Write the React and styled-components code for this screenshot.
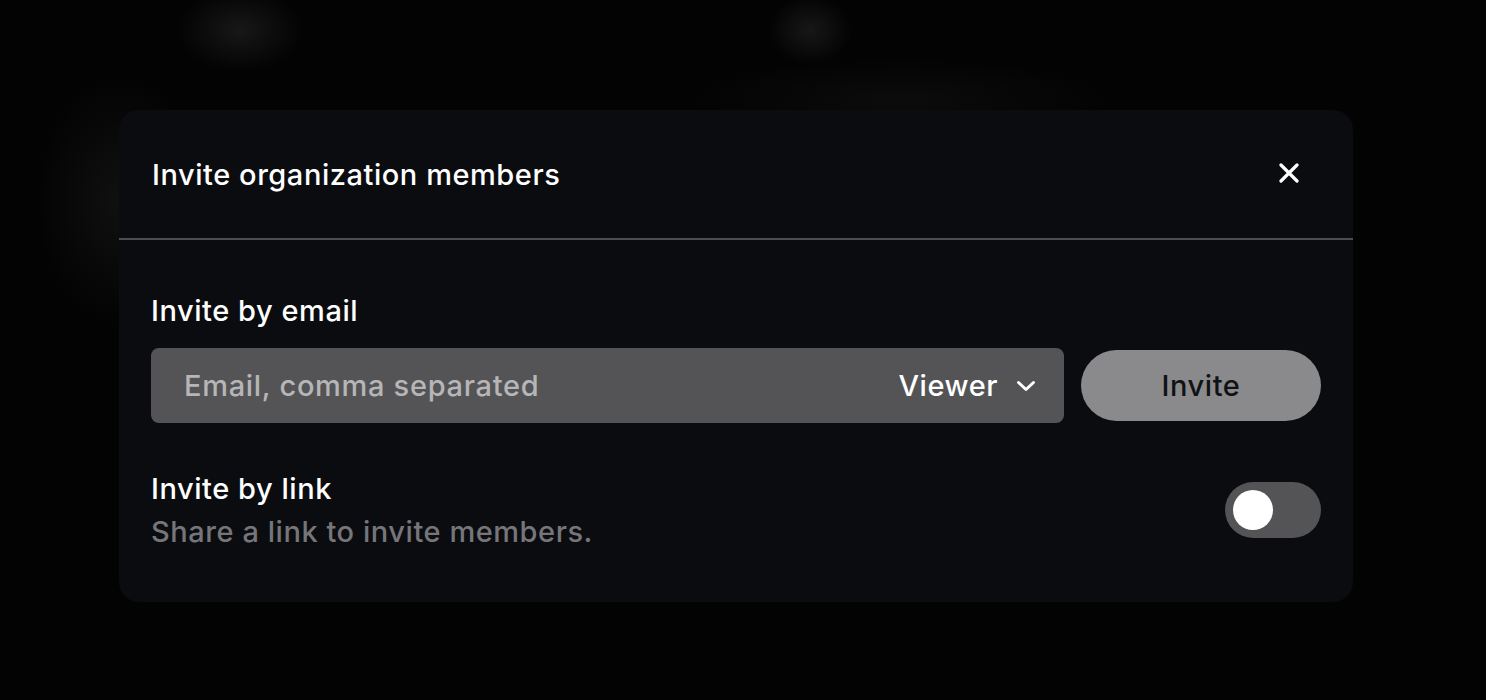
import styled, { createGlobalStyle } from 'styled-components';

const GlobalStyle = createGlobalStyle`
	html, body {
		margin: 0;
		padding: 0;
		background: #030303;
	}
	body {
		font-family: Inter, "Open Sans", sans-serif;
		letter-spacing: 0.55px;
		-webkit-font-smoothing: antialiased;
	}
`;

const Page = styled.div`
	position: relative;
	width: 1486px;
	height: 700px;
	overflow: hidden;
	box-sizing: border-box;
	padding: 110px 0 0 119px;
	background:
		radial-gradient(ellipse 90px 60px at 240px 30px, rgba(40, 40, 40, 0.55), transparent 70%),
		radial-gradient(ellipse 60px 50px at 810px 30px, rgba(40, 40, 40, 0.55), transparent 70%),
		radial-gradient(ellipse 120px 180px at 120px 200px, rgba(25, 25, 25, 0.6), transparent 70%),
		radial-gradient(ellipse 300px 60px at 900px 100px, rgba(20, 20, 20, 0.5), transparent 70%),
		#030303;
`;

const Dialog = styled.div`
	width: 1234px;
	background: #0b0c10;
	border-radius: 20px;
	color: #fff;
	overflow: hidden;
`;

const Header = styled.div`
	display: flex;
	align-items: center;
	justify-content: space-between;
	height: 128px;
	padding: 0 32px 0 33px;
	border-bottom: 2px solid #4d4d52;
`;

const Title = styled.h2`
	margin: 2px 0 0;
	font-size: 29px;
	font-weight: 500;
	line-height: 36px;
	letter-spacing: 0.55px;
`;

const CloseButton = styled.button`
	display: flex;
	align-items: center;
	justify-content: center;
	width: 40px;
	height: 40px;
	margin-right: 12px;
	margin-top: -2px;
	padding: 0;
	border: none;
	background: transparent;
	color: #fff;
	cursor: pointer;
`;

const Body = styled.div`
	display: flex;
	flex-direction: column;
	padding: 52px 32px 51px 32px;
`;

const Label = styled.div`
	font-size: 29px;
	font-weight: 500;
	line-height: 38px;
	color: #fff;
`;

const InviteRow = styled.div`
	display: flex;
	align-items: center;
	gap: 17px;
	margin-top: 18px;
`;

const InputBox = styled.div`
	flex: 1;
	display: flex;
	align-items: center;
	height: 75px;
	border-radius: 8px;
	background: #545456;
	padding: 0 28px 0 33px;
`;

const EmailInput = styled.input`
	flex: 1;
	min-width: 0;
	border: none;
	outline: none;
	background: transparent;
	font-family: inherit;
	font-size: 29px;
	font-weight: 500;
	letter-spacing: 0.7px;
	color: #fff;
	padding: 0;

	&::placeholder {
		color: #b6b6b8;
	}
`;

const RoleSelect = styled.div`
	display: flex;
	align-items: center;
	gap: 18px;
	font-size: 29px;
	font-weight: 500;
	color: #fff;
	cursor: pointer;
`;

const InviteButton = styled.button`
	width: 240px;
	height: 71px;
	border: none;
	border-radius: 36px;
	background: #8a8a8c;
	color: #111214;
	font-family: inherit;
	font-size: 29px;
	font-weight: 500;
	letter-spacing: 0.55px;
	cursor: pointer;
`;

const LinkRow = styled.div`
	display: flex;
	align-items: center;
	justify-content: space-between;
	margin-top: 47px;
`;

const LinkText = styled.div`
	display: flex;
	flex-direction: column;
	gap: 5px;
`;

const Hint = styled.div`
	font-size: 29px;
	font-weight: 500;
	line-height: 38px;
	color: #76767a;
`;

const Toggle = styled.button`
	position: relative;
	width: 96px;
	height: 56px;
	margin-bottom: 2px;
	border: none;
	border-radius: 28px;
	background: ${({ $on }) => ($on ? '#8a8a8c' : '#545456')};
	padding: 0;
	cursor: pointer;

	&::after {
		content: '';
		position: absolute;
		top: 8px;
		left: ${({ $on }) => ($on ? '48px' : '8px')};
		width: 40px;
		height: 40px;
		border-radius: 50%;
		background: #fff;
	}
`;

const App = () => {
	return (
		<>
			<GlobalStyle />
			<Page>
				<Dialog>
					<Header>
						<Title>Invite organization members</Title>
						<CloseButton aria-label="Close">
							<svg width="20" height="20" viewBox="0 0 20 20">
								<path d="M2 2 L18 18 M18 2 L2 18" stroke="#fff" strokeWidth="3.2" strokeLinecap="round" />
							</svg>
						</CloseButton>
					</Header>
					<Body>
						<Label>Invite by email</Label>
						<InviteRow>
							<InputBox>
								<EmailInput placeholder="Email, comma separated" />
								<RoleSelect>
									Viewer
									<svg width="20" height="12" viewBox="0 0 20 12">
										<path d="M2.5 2.5 L10 9.5 L17.5 2.5" fill="none" stroke="#fff" strokeWidth="3" strokeLinecap="round" strokeLinejoin="round" />
									</svg>
								</RoleSelect>
							</InputBox>
							<InviteButton>Invite</InviteButton>
						</InviteRow>
						<LinkRow>
							<LinkText>
								<Label>Invite by link</Label>
								<Hint>Share a link to invite members.</Hint>
							</LinkText>
							<Toggle $on={false} aria-label="Invite by link" />
						</LinkRow>
					</Body>
				</Dialog>
			</Page>
		</>
	);
};

export default App;
